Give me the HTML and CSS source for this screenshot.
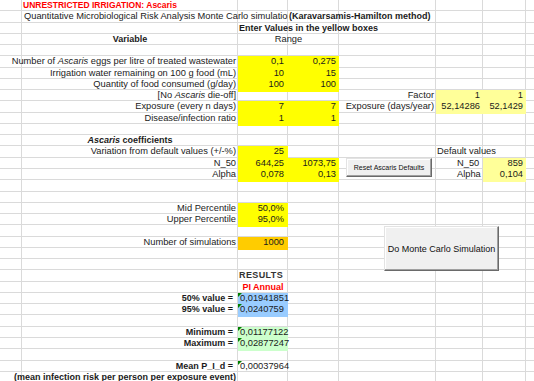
FILE: index.html
```html
<!DOCTYPE html>
<html lang="en">
<head>
  <meta charset="UTF-8" />
  <title>Unrestricted Irrigation: Ascaris</title>
  <link rel="stylesheet" href="styles.css">
</head>
<body>
  <main class="sheet">
    <div class="row"><div class="cell bd title">UNRESTRICTED IRRIGATION: Ascaris</div></div>
    <div class="row">
      <div class="cell bc clip">Quantitative Microbiological Risk Analysis Monte Carlo simulation</div>
      <div class="cell dg bold tight">(Karavarsamis-Hamilton method)</div>
    </div>
    <div class="row"><div class="cell cf bold tight">Enter Values in the yellow boxes</div></div>
    <div class="row">
      <div class="cell b bold center">Variable</div>
      <div class="cell cd center">Range</div>
    </div>
    <div class="row"></div>
    <div class="row">
      <div class="cell ab right"><span>Number of <i>Ascaris</i> eggs per litre of treated wastewater</span></div>
      <div class="cell c num yel">0,1</div>
      <div class="cell d num yel">0,275</div>
    </div>
    <div class="row">
      <div class="cell ab right">Irrigation water remaining on 100 g food (mL)</div>
      <div class="cell c num yel">10</div>
      <div class="cell d num yel">15</div>
    </div>
    <div class="row">
      <div class="cell ab right">Quantity of food consumed (g/day)</div>
      <div class="cell c num yel">100</div>
      <div class="cell d num yel">100</div>
    </div>
    <div class="row">
      <div class="cell ab right"><span>[No <i>Ascaris</i> die-off]</span></div>
      <div class="cell e right">Factor</div>
      <div class="cell f num pale">1</div>
      <div class="cell g num pale">1</div>
    </div>
    <div class="row">
      <div class="cell ab right">Exposure (every n days)</div>
      <div class="cell c num yel">7</div>
      <div class="cell d num yel">7</div>
      <div class="cell e right">Exposure (days/year)</div>
      <div class="cell f num pale">52,14286</div>
      <div class="cell g num pale">52,1429</div>
    </div>
    <div class="row">
      <div class="cell ab right">Disease/infection ratio</div>
      <div class="cell c num yel">1</div>
      <div class="cell d num yel">1</div>
    </div>
    <div class="row"></div>
    <div class="row"><div class="cell b bold center"><span><i>Ascaris</i> coefficients</span></div></div>
    <div class="row">
      <div class="cell ab right">Variation from default values (+/-%)</div>
      <div class="cell c num yel">25</div>
      <div class="cell fg tight">Default values</div>
    </div>
    <div class="row">
      <div class="cell ab right">N_50</div>
      <div class="cell c num yel">644,25</div>
      <div class="cell d num yel">1073,75</div>
      <div class="cell f indent">N_50</div>
      <div class="cell g num pale">859</div>
    </div>
    <div class="row">
      <div class="cell ab right">Alpha</div>
      <div class="cell c num yel">0,078</div>
      <div class="cell d num yel">0,13</div>
      <div class="cell f indent">Alpha</div>
      <div class="cell g num pale">0,104</div>
    </div>
    <div class="row"></div>
    <div class="row"></div>
    <div class="row">
      <div class="cell ab right">Mid Percentile</div>
      <div class="cell c num yel">50,0%</div>
    </div>
    <div class="row">
      <div class="cell ab right">Upper Percentile</div>
      <div class="cell c num yel">95,0%</div>
    </div>
    <div class="row"></div>
    <div class="row">
      <div class="cell ab right">Number of simulations</div>
      <div class="cell c num gold">1000</div>
    </div>
    <div class="row"></div>
    <div class="row"></div>
    <div class="row"><div class="cell cd bold results">RESULTS</div></div>
    <div class="row"><div class="cell c bold center red">PI Annual</div></div>
    <div class="row">
      <div class="cell ab right bold outcome">50% value =</div>
      <div class="cell c flag blue">0,01941851</div>
    </div>
    <div class="row">
      <div class="cell ab right bold outcome">95% value =</div>
      <div class="cell c flag blue">0,0240759</div>
    </div>
    <div class="row"></div>
    <div class="row">
      <div class="cell ab right bold outcome">Minimum =</div>
      <div class="cell c flag mint">0,01177122</div>
    </div>
    <div class="row">
      <div class="cell ab right bold outcome">Maximum =</div>
      <div class="cell c flag mint">0,02877247</div>
    </div>
    <div class="row"></div>
    <div class="row">
      <div class="cell ab right bold outcome">Mean P_I_d =</div>
      <div class="cell c flag">0,00037964</div>
    </div>
    <div class="row">
      <div class="cell ab right bold">(mean infection risk per person per exposure event)</div>
    </div>

    <button type="button" class="btn btn-reset">Reset Ascaris Defaults</button>
    <button type="button" class="btn btn-run">Do Monte Carlo Simulation</button>
  </main>
</body>
</html>
```

FILE: styles.css
```css
/* Spreadsheet look */
* {
  box-sizing: border-box;
}
body {
  margin: 0;
  background: #fff;
  font-family: "Liberation Sans", Arial, sans-serif;
  font-size: 9.3px;
  color: #1b1b1b;
  overflow: hidden;
}
.sheet {
  position: relative;
  width: 534px;
  height: 381px;
  overflow: hidden;
  /* vertical gridlines */
  background:
    linear-gradient(#dadada, #dadada) 21px 0 / 1px 100% no-repeat,
    linear-gradient(#dadada, #dadada) 237px 0 / 1px 100% no-repeat,
    linear-gradient(#dadada, #dadada) 287px 0 / 1px 100% no-repeat,
    linear-gradient(#dadada, #dadada) 338px 0 / 1px 100% no-repeat,
    linear-gradient(#dadada, #dadada) 435px 0 / 1px 100% no-repeat,
    linear-gradient(#dadada, #dadada) 482px 0 / 1px 100% no-repeat,
    linear-gradient(#dadada, #dadada) 525px 0 / 1px 100% no-repeat;
}
.row {
  display: grid;
  grid-template-columns: 22px 216px 50px 51px 97px 47px 43px 1fr;
  height: 11.27px;
  background: linear-gradient(#dadada, #dadada) left bottom / 100% 1px no-repeat;
}
.cell {
  display: flex;
  align-items: center;
  min-width: 0;
  padding: 0 2px 2px;
  line-height: 11px;
  white-space: nowrap;
}

/* column placement */
.ab { grid-column: 1 / 3; }
.b { grid-column: 2; }
.bc { grid-column: 2 / 4; }
.bd { grid-column: 2 / 5; }
.c { grid-column: 3; }
.cd { grid-column: 3 / 5; }
.cf { grid-column: 3 / 7; }
.d { grid-column: 4; }
.dg { grid-column: 4 / 8; }
.e { grid-column: 5; }
.f { grid-column: 6; }
.fg { grid-column: 6 / 8; }
.g { grid-column: 7; }

/* alignment */
.right { justify-content: flex-end; }
.center { justify-content: center; }
.num { justify-content: flex-end; padding-right: 3px; }
.c.num { padding-right: 4px; }
.tight { padding-left: 1px; }
.indent { padding-left: 21px; }
.outcome { padding-right: 5px; }
.clip { overflow: hidden; }

/* text styles */
.bold {
  font-weight: 700;
  font-size: 9px;
}
.title {
  color: #ff0000;
  font-weight: 700;
  font-size: 8.5px;
  padding-left: 1px;
}
.red { color: #ff0000; }
.results {
  color: #333;
  letter-spacing: 0.4px;
  padding-left: 1px;
}

/* fills */
.yel { background: #ffff00; }
.pale { background: #ffff99; }
.gold { background: #ffcc00; }
.blue { background: #99ccff; }
.mint { background: #ccffcc; }

/* number stored as text marker */
.flag {
  position: relative;
  padding-left: 2px;
}
.flag::before {
  content: "";
  position: absolute;
  left: 0;
  top: 0;
  border-top: 4px solid #008000;
  border-right: 4px solid transparent;
}

/* form buttons floating over the sheet */
.btn {
  position: absolute;
  margin: 0;
  padding: 0;
  background: #f0f0f0;
  border: 1px solid;
  border-color: #e3e3e3 #6a6a6a #6a6a6a #e3e3e3;
  box-shadow: inset -1px -1px #a0a0a0, inset 1px 1px #fff;
  font-family: "Liberation Sans", Arial, sans-serif;
  color: #111;
  white-space: nowrap;
}
.btn-reset {
  left: 346px;
  top: 158px;
  width: 86px;
  height: 19px;
  font-size: 7px;
}
.btn-run {
  left: 384px;
  top: 226px;
  width: 115px;
  height: 45px;
  font-size: 9px;
}
```
